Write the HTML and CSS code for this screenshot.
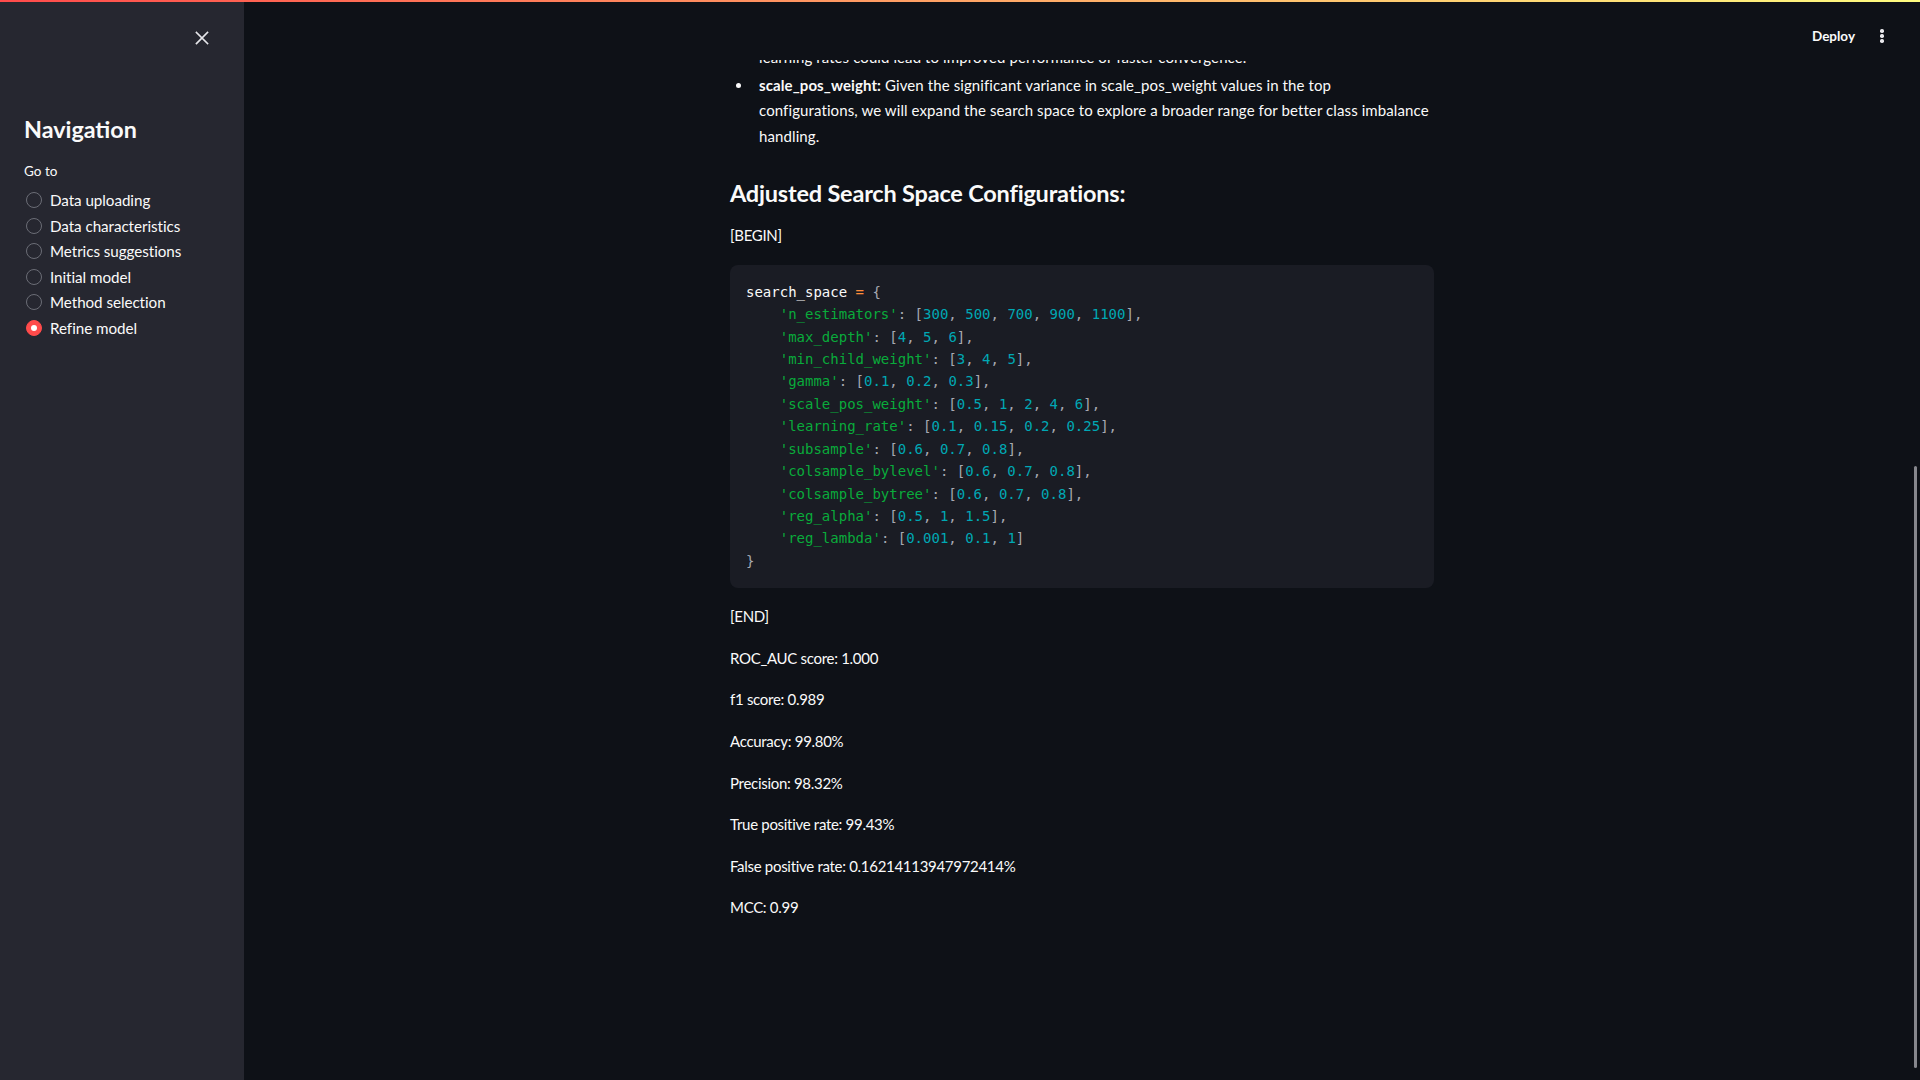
FILE: index.html
```html
<!DOCTYPE html>
<html lang="en">
<head>
<meta charset="utf-8">
<title>Refine model</title>
<link rel="stylesheet" href="styles.css">
</head>
<body>
<div class="decoration"></div>
<div class="app">
  <aside class="sidebar">
    <div class="sb-top">
      <button class="close-btn" aria-label="Close sidebar">
        <svg width="14" height="14" viewBox="0 0 14 14"><path d="M1.5 1.5 L12.5 12.5 M12.5 1.5 L1.5 12.5" stroke="#e6e6ea" stroke-width="1.7" stroke-linecap="square" fill="none"/></svg>
      </button>
    </div>
    <div class="sb-content">
      <h1 class="sb-title">Navigation</h1>
      <div class="sb-label">Go to</div>
      <div class="radio-group">
        <div class="radio"><span class="circle"></span><span class="rlabel">Data uploading</span></div>
        <div class="radio"><span class="circle"></span><span class="rlabel">Data characteristics</span></div>
        <div class="radio"><span class="circle"></span><span class="rlabel">Metrics suggestions</span></div>
        <div class="radio"><span class="circle"></span><span class="rlabel">Initial model</span></div>
        <div class="radio"><span class="circle"></span><span class="rlabel">Method selection</span></div>
        <div class="radio selected"><span class="circle"></span><span class="rlabel">Refine model</span></div>
      </div>
    </div>
  </aside>
  <main class="main">
    <header class="header">
      <div class="toolbar">
        <span class="deploy">Deploy</span>
        <span class="menu" aria-label="Main menu"><i></i><i></i><i></i></span>
      </div>
    </header>
    <div class="content">
      <ul class="list">
        <li class="cont">learning rates could lead to improved performance or faster convergence.</li>
        <li><strong>scale_pos_weight:</strong> Given the significant variance in scale_pos_weight values in the top<br>configurations, we will expand the search space to explore a broader range for better class imbalance<br>handling.</li>
      </ul>
      <h4 class="heading">Adjusted Search Space Configurations:</h4>
      <p>[BEGIN]</p>
<pre class="code"><code><span class="v">search_space</span> <span class="o">=</span> <span class="p">{</span>
    <span class="s">'n_estimators'</span><span class="p">:</span> <span class="p">[</span><span class="n">300</span><span class="p">,</span> <span class="n">500</span><span class="p">,</span> <span class="n">700</span><span class="p">,</span> <span class="n">900</span><span class="p">,</span> <span class="n">1100</span><span class="p">],</span>
    <span class="s">'max_depth'</span><span class="p">:</span> <span class="p">[</span><span class="n">4</span><span class="p">,</span> <span class="n">5</span><span class="p">,</span> <span class="n">6</span><span class="p">],</span>
    <span class="s">'min_child_weight'</span><span class="p">:</span> <span class="p">[</span><span class="n">3</span><span class="p">,</span> <span class="n">4</span><span class="p">,</span> <span class="n">5</span><span class="p">],</span>
    <span class="s">'gamma'</span><span class="p">:</span> <span class="p">[</span><span class="n">0.1</span><span class="p">,</span> <span class="n">0.2</span><span class="p">,</span> <span class="n">0.3</span><span class="p">],</span>
    <span class="s">'scale_pos_weight'</span><span class="p">:</span> <span class="p">[</span><span class="n">0.5</span><span class="p">,</span> <span class="n">1</span><span class="p">,</span> <span class="n">2</span><span class="p">,</span> <span class="n">4</span><span class="p">,</span> <span class="n">6</span><span class="p">],</span>
    <span class="s">'learning_rate'</span><span class="p">:</span> <span class="p">[</span><span class="n">0.1</span><span class="p">,</span> <span class="n">0.15</span><span class="p">,</span> <span class="n">0.2</span><span class="p">,</span> <span class="n">0.25</span><span class="p">],</span>
    <span class="s">'subsample'</span><span class="p">:</span> <span class="p">[</span><span class="n">0.6</span><span class="p">,</span> <span class="n">0.7</span><span class="p">,</span> <span class="n">0.8</span><span class="p">],</span>
    <span class="s">'colsample_bylevel'</span><span class="p">:</span> <span class="p">[</span><span class="n">0.6</span><span class="p">,</span> <span class="n">0.7</span><span class="p">,</span> <span class="n">0.8</span><span class="p">],</span>
    <span class="s">'colsample_bytree'</span><span class="p">:</span> <span class="p">[</span><span class="n">0.6</span><span class="p">,</span> <span class="n">0.7</span><span class="p">,</span> <span class="n">0.8</span><span class="p">],</span>
    <span class="s">'reg_alpha'</span><span class="p">:</span> <span class="p">[</span><span class="n">0.5</span><span class="p">,</span> <span class="n">1</span><span class="p">,</span> <span class="n">1.5</span><span class="p">],</span>
    <span class="s">'reg_lambda'</span><span class="p">:</span> <span class="p">[</span><span class="n">0.001</span><span class="p">,</span> <span class="n">0.1</span><span class="p">,</span> <span class="n">1</span><span class="p">]</span>
<span class="p">}</span></code></pre>
      <p>[END]</p>
      <p>ROC_AUC score: 1.000</p>
      <p>f1 score: 0.989</p>
      <p>Accuracy: 99.80%</p>
      <p>Precision: 98.32%</p>
      <p>True positive rate: 99.43%</p>
      <p>False positive rate: 0.16214113947972414%</p>
      <p>MCC: 0.99</p>
    </div>
    <div class="scroll-thumb"></div>
  </main>
</div>
</body>
</html>
```
FILE: styles.css
```css
* { box-sizing: border-box; }
html, body {
  margin: 0;
  padding: 0;
  width: 1920px;
  height: 1080px;
  overflow: hidden;
  background: #0e1117;
  color: #fafafa;
  font-family: Lato, "Noto Sans", sans-serif;
}
.decoration {
  position: absolute;
  top: 0;
  left: 0;
  right: 0;
  height: 2px;
  background: linear-gradient(90deg, #ff4b4b, #fffd80);
  z-index: 10;
}
.app {
  display: flex;
  height: 1080px;
}
.sidebar {
  width: 244px;
  flex: 0 0 244px;
  background: #262730;
  height: 100%;
}
.sb-top {
  height: 76px;
  display: flex;
  justify-content: flex-end;
  align-items: center;
  padding-right: 26px;
}
.close-btn {
  width: 32px;
  height: 32px;
  border: 0;
  background: transparent;
  padding: 0;
  display: flex;
  align-items: center;
  justify-content: center;
}
.sb-content {
  padding: 0 24px;
}
.sb-title {
  margin: 39px 0 0;
  font-size: 23.3px;
  line-height: 28.8px;
  font-weight: 700;
}
.sb-label {
  margin-top: 16px;
  font-size: 13.5px;
  line-height: 22.4px;
}
.radio-group {
  margin-top: 5.5px;
  display: flex;
  flex-direction: column;
}
.radio {
  display: flex;
  align-items: center;
  height: 25.5px;
  font-size: 15.2px;
  letter-spacing: -0.05px;
}
.circle {
  width: 16px;
  height: 16px;
  margin-left: 2px;
  margin-right: 8px;
  border-radius: 50%;
  border: 1px solid #6b6d76;
  flex: 0 0 16px;
  display: flex;
  align-items: center;
  justify-content: center;
}
.radio.selected .circle {
  background: #ff4b4b;
  border-color: #ff4b4b;
}
.radio.selected .circle::after {
  content: "";
  width: 6px;
  height: 6px;
  border-radius: 50%;
  background: #ffffff;
}
.main {
  flex: 1;
  position: relative;
  overflow: hidden;
}
.header {
  position: absolute;
  top: 0;
  left: 0;
  right: 0;
  height: 60px;
  background: #0e1117;
  z-index: 5;
}
.toolbar {
  height: 60px;
  padding: 12px 26px 0 0;
  display: flex;
  justify-content: flex-end;
  align-items: center;
}
.deploy {
  font-size: 13.5px;
  font-weight: 700;
  color: #fafafa;
  margin-right: 15px;
}
.menu {
  width: 24px;
  height: 24px;
  display: flex;
  flex-direction: column;
  align-items: center;
  justify-content: center;
  gap: 1.7px;
}
.menu i {
  display: block;
  width: 3.4px;
  height: 3.4px;
  border-radius: 50%;
  background: #e8e8ec;
}
.content {
  width: 704px;
  margin: 0 auto;
  padding-top: 44.7px;
  font-size: 15px;
  letter-spacing: -0.3px;
  line-height: 25.6px;
}
.list {
  list-style: none;
  margin: 0;
  padding: 0 0 0 29px;
}
.list li {
  position: relative;
  margin-bottom: 2.6px;
  white-space: nowrap;
  letter-spacing: 0.1px;
}
.list li::before {
  content: "";
  position: absolute;
  left: -23.5px;
  top: 10.5px;
  width: 5px;
  height: 5px;
  border-radius: 50%;
  background: #fafafa;
}
.list li.cont::before {
  display: none;
}
.list strong {
  font-weight: 700;
}
.heading {
  margin: 29px 0 15.8px;
  font-size: 23.5px;
  letter-spacing: -0.2px;
  line-height: 28.8px;
  font-weight: 700;
}
.content p {
  margin: 0 0 16px;
}
.code {
  margin: 0 0 16px;
  padding: 16px;
  background: #1a1c24;
  border-radius: 8px;
  font-family: "DejaVu Sans Mono", "Liberation Mono", monospace;
  font-size: 14px;
  letter-spacing: 0;
  line-height: 22.4px;
  color: #fafafa;
  white-space: pre;
}
.code code { font-family: inherit; }
.v { color: #fafafa; }
.o { color: #ff8c3a; }
.p { color: #a7a9b2; }
.s { color: #09ab3b; }
.n { color: #00a8b4; }
.scroll-thumb {
  position: absolute;
  right: 3px;
  top: 466px;
  width: 3px;
  height: 602px;
  border-radius: 2px;
  background: #86878d;
}
```
